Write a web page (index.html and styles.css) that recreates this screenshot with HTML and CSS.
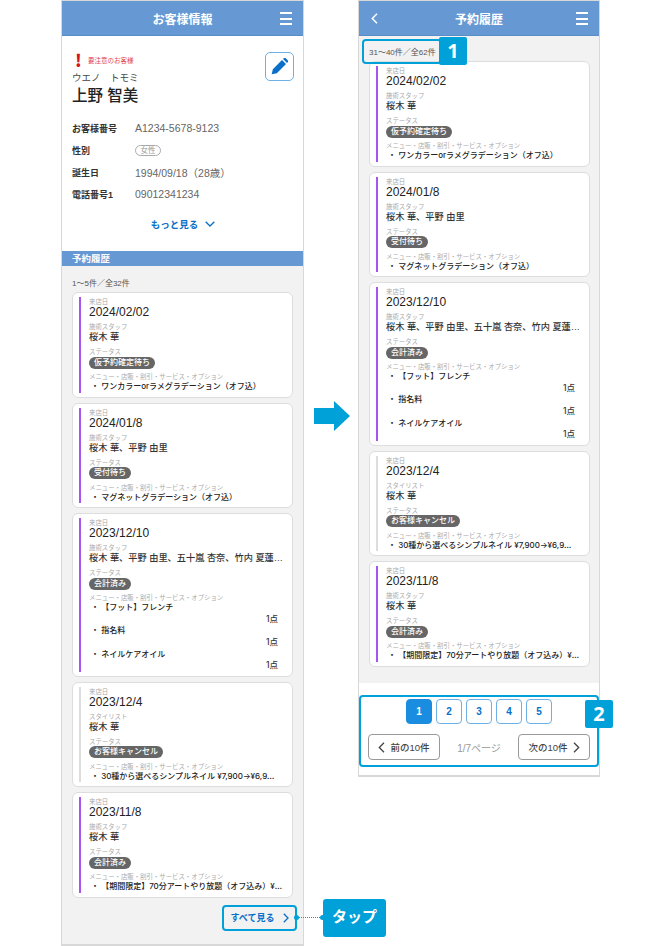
FILE: index.html
```html
<!DOCTYPE html>
<html lang="ja">
<head>
    <meta charset="UTF-8">
    <title>予約履歴</title>
    <link rel="stylesheet" href="styles.css">
</head>
<body>
    <div class="screens">
        <!-- left: customer info -->
        <section class="phone phone-left">
            <header class="top-bar">
                <span class="top-title">お客様情報</span>
                <span class="menu-icon"><i></i><i></i><i></i></span>
            </header>
            <div class="customer">
                <div class="customer-head">
                    <div>
                        <p class="alert"><span class="alert-mark">!</span>要注意のお客様</p>
                        <p class="kana">ウエノ　トモミ</p>
                        <h1 class="name">上野 智美</h1>
                    </div>
                    <button class="edit-button">
                        <svg width="17" height="17" viewBox="0 0 24 24"><path fill="#0a6fc9" d="M1 23l1.6-7.2L15.5 2.9l5.700 5.700L8.200 21.400z M17 1.400l1-1c.8-.8 2-.8 2.800 0l2.800 2.800c.8.8.8 2 0 2.800l-1 1z"/></svg>
                    </button>
                </div>
                <dl class="info">
                    <div class="info-row"><dt>お客様番号</dt><dd>A1234-5678-9123</dd></div>
                    <div class="info-row"><dt>性別</dt><dd><span class="gender">女性</span></dd></div>
                    <div class="info-row"><dt>誕生日</dt><dd>1994/09/18（28歳）</dd></div>
                    <div class="info-row"><dt>電話番号1</dt><dd>09012341234</dd></div>
                </dl>
                <a class="more">もっと見る
                    <svg width="10" height="6" viewBox="0 0 10 6"><path d="M.7.7L5 5l4.300-4.300" fill="none" stroke="#0a6fc9" stroke-width="1.300"/></svg>
                </a>
            </div>
            <h2 class="section-bar">予約履歴</h2>
            <div class="history history-left">
                <p class="count">1〜5件／全32件</p>
                <div class="cards">
                    <article class="card"><div class="card-inner">
                        <p class="label">来店日</p><p class="date">2024/02/02</p>
                        <p class="label">施術スタッフ</p><p class="value">桜木 華</p>
                        <p class="label">ステータス</p><p class="status-line"><span class="status">仮予約確定待ち</span></p>
                        <p class="label">メニュー・店販・割引・サービス・オプション</p><p class="item">・ ワンカラーorラメグラデーション（オフ込）</p>
                    </div></article>
                    <article class="card"><div class="card-inner">
                        <p class="label">来店日</p><p class="date">2024/01/8</p>
                        <p class="label">施術スタッフ</p><p class="value">桜木 華、平野 由里</p>
                        <p class="label">ステータス</p><p class="status-line"><span class="status">受付待ち</span></p>
                        <p class="label">メニュー・店販・割引・サービス・オプション</p><p class="item">・ マグネットグラデーション（オフ込）</p>
                    </div></article>
                    <article class="card"><div class="card-inner">
                        <p class="label">来店日</p><p class="date">2023/12/10</p>
                        <p class="label">施術スタッフ</p><p class="value">桜木 華、平野 由里、五十嵐 杏奈、竹内 夏蓮…</p>
                        <p class="label">ステータス</p><p class="status-line"><span class="status">会計済み</span></p>
                        <p class="label">メニュー・店販・割引・サービス・オプション</p>
                        <p class="item">・ 【フット】フレンチ</p><p class="qty">1点</p>
                        <p class="item">・ 指名料</p><p class="qty">1点</p>
                        <p class="item">・ ネイルケアオイル</p><p class="qty">1点</p>
                    </div></article>
                    <article class="card card-cancel"><div class="card-inner">
                        <p class="label">来店日</p><p class="date">2023/12/4</p>
                        <p class="label">スタイリスト</p><p class="value">桜木 華</p>
                        <p class="label">ステータス</p><p class="status-line"><span class="status">お客様キャンセル</span></p>
                        <p class="label">メニュー・店販・割引・サービス・オプション</p><p class="item">・ 30種から選べるシンプルネイル ¥7,900→¥6,9…</p>
                    </div></article>
                    <article class="card"><div class="card-inner">
                        <p class="label">来店日</p><p class="date">2023/11/8</p>
                        <p class="label">施術スタッフ</p><p class="value">桜木 華</p>
                        <p class="label">ステータス</p><p class="status-line"><span class="status">会計済み</span></p>
                        <p class="label">メニュー・店販・割引・サービス・オプション</p><p class="item">・ 【期間限定】70分アートやり放題（オフ込み）¥…</p>
                    </div></article>
                </div>
                <div class="see-all-row">
                    <a class="see-all">すべて見る
                        <svg width="6" height="10" viewBox="0 0 6 10"><path d="M.8.7L5 5 .8 9.300" fill="none" stroke="#0a6fc9" stroke-width="1.300"/></svg>
                    </a>
                </div>
            </div>
        </section>

        <!-- right: history list -->
        <section class="phone phone-right">
            <header class="top-bar">
                <svg class="back-icon" width="7" height="11" viewBox="0 0 7 11"><path d="M6 .8L1.300 5.500 6 10.200" fill="none" stroke="#fff" stroke-width="1.500"/></svg>
                <span class="top-title">予約履歴</span>
                <span class="menu-icon"><i></i><i></i><i></i></span>
            </header>
            <div class="history history-right">
                <p class="count">31〜40件／全62件</p>
                <div class="cards">
                    <article class="card"><div class="card-inner">
                        <p class="label">来店日</p><p class="date">2024/02/02</p>
                        <p class="label">施術スタッフ</p><p class="value">桜木 華</p>
                        <p class="label">ステータス</p><p class="status-line"><span class="status">仮予約確定待ち</span></p>
                        <p class="label">メニュー・店販・割引・サービス・オプション</p><p class="item">・ ワンカラーorラメグラデーション（オフ込）</p>
                    </div></article>
                    <article class="card"><div class="card-inner">
                        <p class="label">来店日</p><p class="date">2024/01/8</p>
                        <p class="label">施術スタッフ</p><p class="value">桜木 華、平野 由里</p>
                        <p class="label">ステータス</p><p class="status-line"><span class="status">受付待ち</span></p>
                        <p class="label">メニュー・店販・割引・サービス・オプション</p><p class="item">・ マグネットグラデーション（オフ込）</p>
                    </div></article>
                    <article class="card"><div class="card-inner">
                        <p class="label">来店日</p><p class="date">2023/12/10</p>
                        <p class="label">施術スタッフ</p><p class="value">桜木 華、平野 由里、五十嵐 杏奈、竹内 夏蓮…</p>
                        <p class="label">ステータス</p><p class="status-line"><span class="status">会計済み</span></p>
                        <p class="label">メニュー・店販・割引・サービス・オプション</p>
                        <p class="item">・ 【フット】フレンチ</p><p class="qty">1点</p>
                        <p class="item">・ 指名料</p><p class="qty">1点</p>
                        <p class="item">・ ネイルケアオイル</p><p class="qty">1点</p>
                    </div></article>
                    <article class="card card-cancel"><div class="card-inner">
                        <p class="label">来店日</p><p class="date">2023/12/4</p>
                        <p class="label">スタイリスト</p><p class="value">桜木 華</p>
                        <p class="label">ステータス</p><p class="status-line"><span class="status">お客様キャンセル</span></p>
                        <p class="label">メニュー・店販・割引・サービス・オプション</p><p class="item">・ 30種から選べるシンプルネイル ¥7,900→¥6,9…</p>
                    </div></article>
                    <article class="card"><div class="card-inner">
                        <p class="label">来店日</p><p class="date">2023/11/8</p>
                        <p class="label">施術スタッフ</p><p class="value">桜木 華</p>
                        <p class="label">ステータス</p><p class="status-line"><span class="status">会計済み</span></p>
                        <p class="label">メニュー・店販・割引・サービス・オプション</p><p class="item">・ 【期間限定】70分アートやり放題（オフ込み）¥…</p>
                    </div></article>
                </div>
            </div>
            <div class="pager">
                <div class="pages">
                    <a class="page current">1</a>
                    <a class="page">2</a>
                    <a class="page">3</a>
                    <a class="page">4</a>
                    <a class="page">5</a>
                </div>
                <div class="pager-nav">
                    <a class="nav-button">
                        <svg width="7" height="11" viewBox="0 0 7 11"><path d="M6 .8L1.300 5.500 6 10.200" fill="none" stroke="#444" stroke-width="1.300"/></svg>
                        前の10件</a>
                    <span class="page-count">1/7ページ</span>
                    <a class="nav-button">次の10件
                        <svg width="7" height="11" viewBox="0 0 7 11"><path d="M1 .8L5.700 5.500 1 10.200" fill="none" stroke="#444" stroke-width="1.300"/></svg>
                    </a>
                </div>
            </div>
        </section>
    </div>

    <!-- callouts on top of the screens -->
    <svg class="flow-arrow" width="36" height="30" viewBox="0 0 36 30"><path fill="#00a0d8" d="M0 7h20V0l16 15-16 15v-7H0z"/></svg>
    <div class="tap-line"></div>
    <div class="tap-label">タップ</div>
    <div class="mark-box mark-box-1"></div>
    <div class="mark-num mark-num-1">1</div>
    <div class="mark-box mark-box-2"></div>
    <div class="mark-num mark-num-2">2</div>
</body>
</html>
```

FILE: styles.css
```css
* {
    margin: 0;
    padding: 0;
    box-sizing: border-box;
}

body {
    position: relative;
    width: 670px;
    height: 946px;
    overflow: hidden;
    background: #fff;
    color: #333;
    font-family: "Liberation Sans", "Noto Sans CJK JP", sans-serif;
}

.screens {
    display: flex;
    align-items: flex-start;
    gap: 54px;
    padding-left: 61px;
}

.phone {
    border: 1px solid #d8d8d8;
    border-bottom-width: 2px;
    background: #f2f2f2;
}

.phone-left {
    width: 243px;
    height: 946px;
}

.phone-right {
    width: 242px;
    height: 777px;
}

/* top bar */
.top-bar {
    position: relative;
    height: 35px;
    display: flex;
    align-items: center;
    justify-content: center;
    background: #6699d3;
    border-bottom: 1px solid #5a8cc6;
}

.top-title {
    color: #fff;
    font-size: 12px;
    font-weight: 700;
}

.menu-icon {
    position: absolute;
    right: 11px;
    top: 11px;
    width: 12px;
    height: 13px;
    display: flex;
    flex-direction: column;
    justify-content: space-between;
}

.menu-icon i {
    display: block;
    height: 2px;
    background: #fff;
}

.back-icon {
    position: absolute;
    left: 12px;
    top: 12px;
}

/* customer block */
.customer {
    height: 215px;
    background: #fff;
    padding: 15px 9px 0 10px;
}

.customer-head {
    display: flex;
    justify-content: space-between;
    align-items: flex-start;
}

.alert {
    display: flex;
    align-items: center;
    height: 16px;
    padding-left: 3px;
    margin-top: 1px;
    color: #e0444f;
    font-size: 6.5px;
}

.alert-mark {
    width: 13px;
    color: #d8141f;
    font-family: "Noto Sans CJK JP", sans-serif;
    font-size: 17px;
    font-weight: 900;
    line-height: 16px;
}

.kana {
    margin-top: 3px;
    font-size: 9.5px;
    line-height: 14px;
    color: #444;
}

.name {
    font-size: 15.5px;
    font-weight: 500;
    line-height: 22px;
    color: #222;
}

.edit-button {
    width: 29px;
    height: 29px;
    margin-top: 1px;
    display: flex;
    align-items: center;
    justify-content: center;
    background: #fff;
    border: 1.5px solid #6cb0e6;
    border-radius: 5px;
}

.info {
    margin-top: 10px;
}

.info-row {
    display: flex;
    align-items: center;
    height: 22px;
    font-size: 9px;
}

.info-row dt {
    width: 63px;
    font-weight: 700;
    color: #333;
}

.info-row dd {
    color: #666;
    font-size: 10.5px;
}

.gender {
    display: block;
    width: 26px;
    height: 11px;
    border: 1px solid #aaa;
    border-radius: 6px;
    color: #999;
    font-size: 7.5px;
    line-height: 9px;
    text-align: center;
}

.more {
    display: flex;
    align-items: center;
    justify-content: center;
    gap: 7px;
    margin-top: 11px;
    height: 16px;
    color: #0a6fc9;
    font-size: 9.5px;
    font-weight: 700;
}

.section-bar {
    height: 15px;
    padding-left: 10px;
    background: #6699d3;
    color: #fff;
    font-size: 9.5px;
    font-weight: 700;
    line-height: 15px;
}

/* history cards */
.history {
    padding: 0 10px;
}

.history-left {
    padding-top: 11px;
}

.history-right {
    height: 647px;
    padding-top: 10px;
    padding-right: 9px;
}

.count {
    height: 15px;
    font-size: 8px;
    line-height: 14px;
    color: #555;
}

.cards {
    display: flex;
    flex-direction: column;
    gap: 5px;
}

.card {
    background: #fff;
    border: 1.5px solid #ddd;
    border-radius: 6px;
    padding: 4px 10px 4px 6px;
}

.card-inner {
    border-left: 2.5px solid #a855f0;
    padding-left: 8px;
}

.card-cancel .card-inner {
    border-left-color: #ddd;
}

.label {
    font-size: 6.4px;
    line-height: 9px;
    color: #aaa;
    white-space: nowrap;
}

.date {
    height: 13px;
    margin-bottom: 3px;
    font-size: 12px;
    line-height: 13px;
    color: #222;
}

.value {
    height: 13px;
    margin-bottom: 3px;
    font-size: 9.2px;
    font-weight: 500;
    line-height: 13px;
    color: #333;
    white-space: nowrap;
}

.status-line {
    height: 13px;
    margin-bottom: 3px;
    display: flex;
    align-items: center;
}

.status {
    padding: 0 5px;
    border-radius: 6px;
    background: #666;
    color: #fff;
    font-size: 8px;
    font-weight: 500;
    line-height: 12px;
}

.item {
    font-family: Inter, "Noto Sans CJK JP", sans-serif;
    font-size: 8px;
    font-weight: 500;
    line-height: 11.6px;
    color: #222;
    padding-left: 2px;
    white-space: nowrap;
}

.qty {
    font-family: Inter, "Noto Sans CJK JP", sans-serif;
    font-size: 8.5px;
    font-weight: 500;
    line-height: 11.6px;
    text-align: right;
    color: #333;
    padding-right: 4px;
}

.see-all-row {
    display: flex;
    justify-content: flex-end;
    margin-top: 7px;
    margin-right: -4px;
}

.see-all {
    width: 75px;
    height: 26px;
    display: flex;
    align-items: center;
    justify-content: center;
    gap: 8px;
    border: 2px solid #00a0d8;
    border-radius: 4px;
    color: #0a6fc9;
    font-size: 9px;
    font-weight: 700;
}

/* pager */
.pager {
    height: 92px;
    background: #fff;
    padding: 16px 9px 0 9px;
}

.pages {
    display: flex;
    justify-content: center;
    gap: 4px;
}

.page {
    width: 26px;
    height: 25px;
    display: flex;
    align-items: center;
    justify-content: center;
    border: 1px solid #6cb0e6;
    border-radius: 4px;
    color: #0a6fc9;
    font-size: 10px;
    font-weight: 700;
}

.page.current {
    background: #1b8de0;
    border-color: #1b8de0;
    color: #fff;
}

.pager-nav {
    display: flex;
    align-items: center;
    justify-content: space-between;
    margin-top: 10px;
}

.nav-button {
    width: 72px;
    height: 26px;
    display: flex;
    align-items: center;
    justify-content: center;
    gap: 5px;
    border: 1px solid #999;
    border-radius: 4px;
    color: #444;
    font-size: 9.5px;
    font-weight: 500;
}

.page-count {
    color: #999;
    font-size: 10px;
}

/* callouts */
.flow-arrow {
    position: absolute;
    left: 314px;
    top: 401px;
}

.tap-line {
    position: absolute;
    left: 296px;
    top: 917px;
    width: 28px;
    border-top: 1px dotted #00a0d8;
}

.tap-line::before,
.tap-line::after {
    content: "";
    position: absolute;
    top: -3px;
    width: 5px;
    height: 5px;
    border-radius: 50%;
    background: #00a0d8;
}

.tap-line::before {
    left: -2px;
}

.tap-line::after {
    right: -1px;
}

.tap-label {
    position: absolute;
    left: 323px;
    top: 899px;
    width: 63px;
    height: 38px;
    border-radius: 3px;
    background: #00a0d8;
    color: #fff;
    font-size: 15px;
    font-weight: 700;
    line-height: 36px;
    text-align: center;
}

.mark-box {
    position: absolute;
    border: 2px solid #00a0d8;
    border-radius: 4px;
}

.mark-box-1 {
    left: 362px;
    top: 39px;
    width: 80px;
    height: 25px;
}

.mark-box-2 {
    left: 359px;
    top: 695px;
    width: 240px;
    height: 72px;
}

.mark-num {
    position: absolute;
    width: 28px;
    height: 28px;
    border-radius: 2px;
    background: #00a0d8;
    color: #fff;
    font-family: "Noto Sans", sans-serif;
    font-size: 20px;
    font-weight: 700;
    line-height: 27px;
    text-align: center;
}

.mark-num-1 {
    left: 439px;
    top: 37px;
}

.mark-num-2 {
    left: 585px;
    top: 700px;
}
```
